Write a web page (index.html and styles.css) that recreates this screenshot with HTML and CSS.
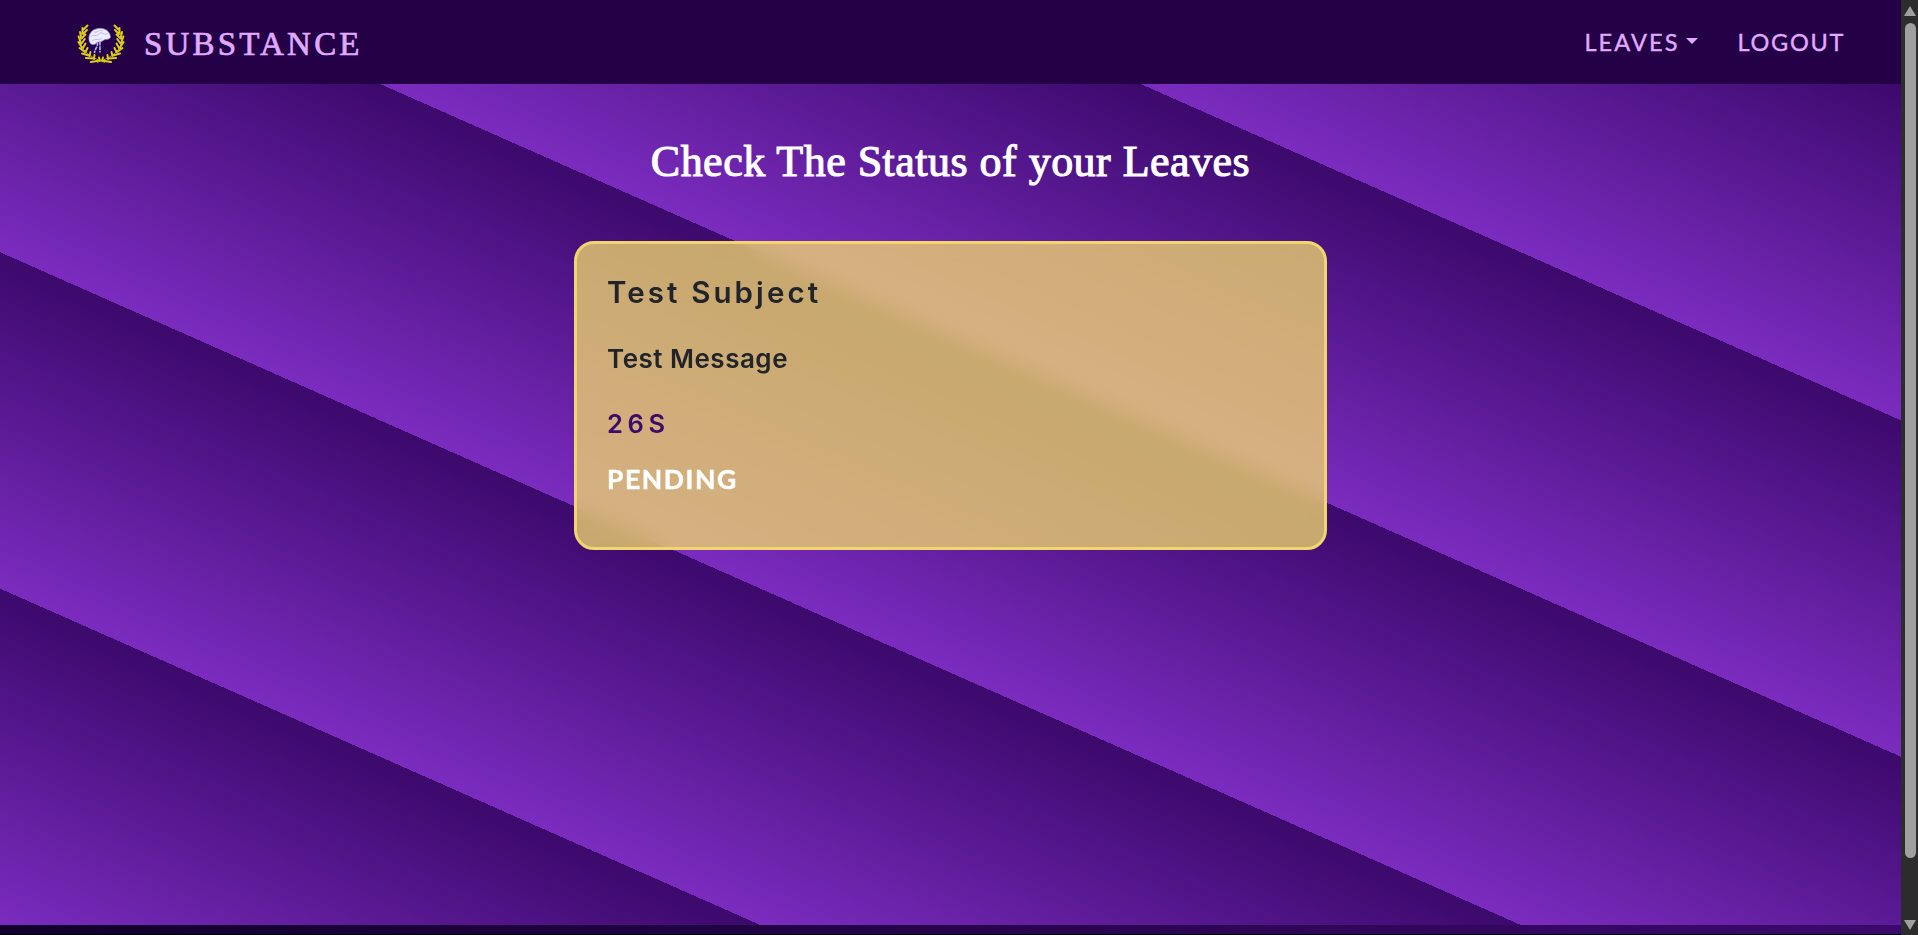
FILE: index.html
```html
<!DOCTYPE html>
<html lang="en">
<head>
<meta charset="utf-8">
<title>Substance</title>
<link rel="stylesheet" href="styles.css">
</head>
<body>
<div class="page">
  <header class="navbar">
    <a class="brand">
      <svg class="logo" viewBox="0 0 48 40">
        <defs>
          <g id="branch">
            <path class="twig" d="M9 3C3 9 2 17 5 23S15 34 28 38.500"/>
            <path class="leaf" d="M10.500 1.500L7 5M5.500 4L5.500 9M10 6L6 10M3 8L4 13M8.500 10.500L4.500 14.500M1.600 12.500L3.500 18M7.800 15L4.500 19.500M1.400 18L5 23.500M8.500 19.500L6 24M2.500 24L8 28M10.500 24L8.500 28M5 29.500L12 31.500M13.500 28L12.500 32M9 34L17 34.500M17.500 31L17 35M14 38L23 36.500M22 33.500L23 36.500"/>
          </g>
        </defs>
        <use href="#branch"/>
        <use href="#branch" transform="matrix(-1 0 0 1 48 0)"/>
        <path class="face" d="M32 9c4 4 3 7 6 10-1 2-3 1-3 5-1 3-5 1-6 5M13 19c1 5 3 6 2 11"/>
        <path class="brain" d="M13 19c-3-6 0-13.500 8-14.500 7-1 12.500 3 12.500 9-2 3-6 1-8 3.500-3 2-4 0-6 2-2 2.500-5 2-6.500 0z"/>
        <path class="fold" d="M14 13c3-4 5 1 8-3s5 3 9-1M17 8c4 1 5-3 9-1M15 17c4-3 6 0 10-3"/>
        <path class="stem" d="M20 18c2 4-2 6-2.500 11M23 17.500v11"/>
      </svg>
      <span class="brand-name">SUBSTANCE</span>
    </a>
    <nav class="links">
      <a class="link link-leaves"><span>LEAVES</span><i class="caret"></i></a>
      <a class="link link-logout">LOGOUT</a>
    </nav>
  </header>
  <main class="content">
    <h1 class="title">Check The Status of your Leaves</h1>
    <section class="card">
      <h3 class="subject">Test Subject</h3>
      <p class="message">Test Message</p>
      <p class="days">26S</p>
      <p class="status">PENDING</p>
    </section>
  </main>
  <footer class="footer"></footer>
</div>
<div class="scrollbar">
  <i class="arrow up"></i>
  <i class="thumb"></i>
  <i class="arrow down"></i>
</div>
</body>
</html>
```
FILE: styles.css
```css
* { box-sizing: border-box; }
body {
  margin: 0;
  width: 1918px;
  height: 935px;
  display: flex;
  overflow: hidden;
  background: #000;
  font-family: Lato, "Noto Sans", sans-serif;
}
h1, h3, p { margin: 0; white-space: nowrap; }
.page { width: 1901px; height: 934px; display: flex; flex-direction: column; }
.navbar {
  height: 84px;
  padding: 0 56px 0 77px;
  display: flex;
  justify-content: space-between;
  background: #240046;
  color: #e0aaff;
}
.brand { display: flex; align-items: flex-start; gap: 19px; }
.logo { width: 48px; height: 40px; margin-top: 24px; }
.twig { fill: none; stroke: #b5a51c; stroke-width: 1; }
.leaf { fill: none; stroke: #dccd18; stroke-width: 2; stroke-linecap: round; }
.brain { fill: #eeedff; stroke: #8580cc; stroke-width: .7; }
.fold { fill: none; stroke: #aaa7e0; stroke-width: .7; }
.stem { fill: none; stroke: #a9a5ee; stroke-width: 1.7; stroke-dasharray: 4 .7; }
.face { fill: none; stroke: #1c0868; stroke-width: 1; }
.brand-name {
  margin-top: 24px;
  font: 500 33px/40px "Liberation Serif", serif;
  letter-spacing: 3.2px;
  -webkit-text-stroke: .7px;
}
.links { display: flex; gap: 40px; font-size: 23.5px; line-height: 84px; letter-spacing: 2.1px; -webkit-text-stroke: .4px; }
.link { display: flex; align-items: center; }
.link-logout { letter-spacing: 1.7px; }
.caret { margin-left: 6px; margin-top: -3px; border: 6px solid transparent; border-top-color: #e0aaff; border-bottom: 0; }
.content {
  height: 841px;
  padding-top: 49px;
  display: flex;
  flex-direction: column;
  align-items: center;
  background: repeating-linear-gradient(to top right, #7b2cbf, #3c096c 20%);
}
.title {
  height: 58px;
  color: #fff;
  font: 500 44px/58px "Liberation Serif", serif;
  letter-spacing: .48px;
  -webkit-text-stroke: 1.1px;
}
.card {
  width: 753px;
  height: 309px;
  margin-top: 50px;
  padding: 26px 30px;
  border: 3px solid #f0d66d;
  border-radius: 20px;
  background: rgba(245, 222, 110, .75);
  backdrop-filter: blur(10px);
  color: #212529;
}
.subject { font: 600 29.5px/44px Inter, sans-serif; letter-spacing: 3.1px; }
.message { margin-top: 24px; font: 600 26px/42px Inter, sans-serif; letter-spacing: .5px; }
.days { margin-top: 24px; font: 600 25.5px/40px Inter, sans-serif; letter-spacing: 4.6px; color: #3c096c; }
.status { margin-top: 15px; font-size: 26.5px; line-height: 40px; letter-spacing: 1.6px; color: #fff; font-weight: 700; -webkit-text-stroke: .5px; }
.footer { height: 9px; background: linear-gradient(to right, #10002b, #3c096c); }
.scrollbar {
  width: 17px;
  height: 935px;
  padding: 6px 0 5px 1px;
  display: flex;
  flex-direction: column;
  align-items: center;
  background: #2c2c2c;
}
.arrow { border: 6px solid transparent; }
.up { border-top: 0; border-bottom: 10px solid #9f9f9f; }
.down { margin-top: auto; border-bottom: 0; border-top: 10px solid #9f9f9f; }
.thumb { width: 11px; height: 835px; margin-top: 7px; border-radius: 6px; background: #9f9f9f; }
```
